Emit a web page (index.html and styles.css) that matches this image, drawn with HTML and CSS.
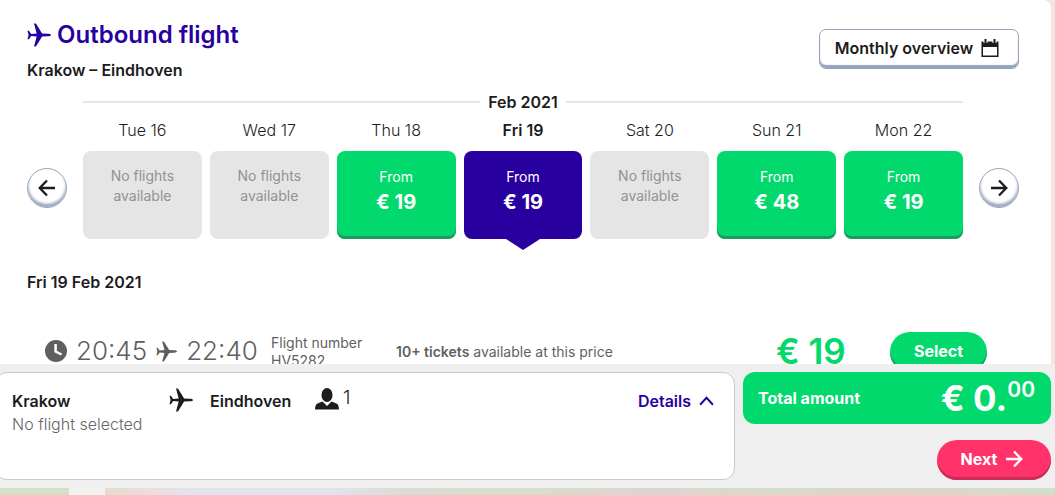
FILE: index.html
```html
<!DOCTYPE html>
<html lang="en">
<head>
<meta charset="utf-8">
<title>Outbound flight</title>
<link rel="stylesheet" href="styles.css">
</head>
<body>
<svg class="sprite" aria-hidden="true">
  <symbol id="plane" viewBox="0 0 24 24"><path d="M24 12c0 .7-1.300 1.300-3.200 1.300l-5.700.3-5.700 9.200c-.2.400-.5.600-1 .6H7l2.700-9.800-5.500-.5-2.300 3.200H.5l1.100-4.300L.5 7.700h1.400l2.300 3.200 5.500-.5L7 .6h1.400c.5 0 .8.200 1 .6l5.700 9.200 5.700.3c1.900 0 3.200.6 3.200 1.300z"/></symbol>
  <symbol id="arrow" viewBox="0 0 18 18"><path d="M1 9h15M9 1.500L16.300 9 9 16.500" fill="none" stroke="currentColor" stroke-width="2.300"/></symbol>
</svg>
<div class="page">
  <main class="panel">
    <header class="head">
      <div>
        <h1 class="title"><svg class="icon-plane"><use href="#plane"/></svg>Outbound flight</h1>
        <p class="route">Krakow – Eindhoven</p>
      </div>
      <button class="overview" type="button">Monthly overview
        <svg class="icon-cal" viewBox="0 0 18 18"><path fill-rule="evenodd" d="M.5 2.500h2V4h4V2.500h5V4h4V2.500h2V18H.5zM2 8v8.500h14V8z"/><path d="M3.500 0h2v4h-2zM12.500 0h2v4h-2z"/></svg>
      </button>
    </header>
    <section class="calendar">
      <button class="round back" type="button" aria-label="Previous days"><svg><use href="#arrow"/></svg></button>
      <div class="week">
        <h2 class="month">Feb 2021</h2>
        <div class="days">
          <div class="day"><span class="date">Tue 16</span><div class="slot none">No flights available</div></div>
          <div class="day"><span class="date">Wed 17</span><div class="slot none">No flights available</div></div>
          <div class="day"><span class="date">Thu 18</span><button class="slot" type="button">From<strong>€ 19</strong></button></div>
          <div class="day"><span class="date current">Fri 19</span><button class="slot selected" type="button">From<strong>€ 19</strong></button></div>
          <div class="day"><span class="date">Sat 20</span><div class="slot none">No flights available</div></div>
          <div class="day"><span class="date">Sun 21</span><button class="slot" type="button">From<strong>€ 48</strong></button></div>
          <div class="day"><span class="date">Mon 22</span><button class="slot" type="button">From<strong>€ 19</strong></button></div>
        </div>
      </div>
      <button class="round" type="button" aria-label="Next days"><svg><use href="#arrow"/></svg></button>
    </section>
    <h2 class="chosen">Fri 19 Feb 2021</h2>
    <section class="flight">
      <div class="times">
        <svg class="icon-clock" viewBox="0 0 22 22"><circle cx="11" cy="11" r="11"/><path d="M10.600 4v7.500l6 3" fill="none" stroke="#fff" stroke-width="2.500"/></svg>
        <span>20:45</span>
        <svg class="icon-hop"><use href="#plane"/></svg>
        <span>22:40</span>
      </div>
      <div class="number">Flight number<br>HV5282</div>
      <div class="tickets"><strong>10+ tickets</strong> available at this price</div>
      <div class="price">€ 19</div>
      <button class="select" type="button">Select</button>
    </section>
  </main>
  <footer class="basket">
    <section class="summary">
      <div class="from"><strong>Krakow</strong><span class="status">No flight selected</span></div>
      <svg class="icon-trip"><use href="#plane"/></svg>
      <strong class="to">Eindhoven</strong>
      <div class="people"><svg class="icon-person" viewBox="0 0 24 22"><ellipse cx="12" cy="7" rx="5.500" ry="7"/><path d="M7.500 13.500L12 18l4.500-4.500 5 2c1.700.8 2.300 2.800 2.500 6H0c.2-3.200.8-5.200 2.500-6z"/></svg>1</div>
      <a class="details" href="#details">Details<svg viewBox="0 0 14 9"><path d="M1 8l6-6.500L13 8" fill="none" stroke="currentColor" stroke-width="1.800"/></svg></a>
    </section>
    <div class="checkout">
      <div class="total"><span>Total amount</span><span class="amount">€ 0.<span class="cents">00</span></span></div>
      <button class="next" type="button">Next<svg><use href="#arrow"/></svg></button>
    </div>
  </footer>
</div>
</body>
</html>
```
FILE: styles.css
```css
* { box-sizing: border-box; }

body {
  margin: 0;
  color: #1c1c1c;
  font: 400 16px/20px Inter, "Open Sans", sans-serif;
  background: #f3e6da linear-gradient(90deg, #d4dfc8 0 69px, #f1f2eb 69px 105px, #e4dccb 105px, #ecdde0 155px, #e0e3ef 190px, #e0e3ef 330px, #dbdcd2 400px, #d6decb 520px, #ddd5cf 640px, #d6dbc8 780px, #dfd4c8 900px, #d1dfca) bottom / 100% 7px no-repeat;
}

button { font: inherit; color: inherit; border: 0; padding: 0; cursor: pointer; }
h1, h2, p { margin: 0; }
strong { font-weight: 600; }
svg { fill: currentColor; flex: none; }
.sprite { position: absolute; width: 0; height: 0; }

.page {
  display: flex;
  flex-direction: column;
  height: 100vh;
  padding-bottom: 7px;
}

.panel {
  flex: 1;
  min-height: 0;
  overflow: hidden;
  margin-right: 4px;
  padding: 20px 32px 0 27px;
  background: #fff;
  border-top-right-radius: 8px;
}

.head { display: flex; justify-content: space-between; align-items: flex-start; }
.title {
  display: flex;
  align-items: center;
  gap: 6px;
  color: #2900a0;
  font-size: 24px;
  line-height: 30px;
  font-weight: 600;
}
.icon-plane, .icon-trip { width: 24px; height: 24px; }
.route { margin-top: 10px; font-weight: 600; }

.overview {
  display: flex;
  align-items: center;
  justify-content: center;
  gap: 8px;
  width: 200px;
  height: 40px;
  margin-top: 9px;
  padding: 0 4px 2px 0;
  background: #fff;
  border: 1px solid #94a5bb;
  border-radius: 7px;
  box-shadow: inset 0 -3px 1px #94a5bb;
  font-weight: 600;
}
.icon-cal { width: 18px; height: 18px; }

.calendar { display: flex; align-items: flex-end; gap: 16px; margin-top: 12px; }
.round {
  display: flex;
  align-items: center;
  justify-content: center;
  width: 40px;
  height: 40px;
  margin-bottom: 31px;
  background: #fff;
  border: 1px solid #94a5bb;
  border-radius: 50%;
  box-shadow: inset 0 -3px 3px #94a5bb;
}
.round svg { width: 18px; height: 18px; }
.back svg { transform: rotate(180deg); }

.week { flex: 1; }
.month {
  display: flex;
  align-items: center;
  gap: 8px;
  font-size: 16px;
  font-weight: 600;
}
.month::before, .month::after { content: ""; flex: 1; height: 2px; background: #e5e5e5; }

.days { display: grid; grid-template-columns: repeat(7, 1fr); gap: 8px; margin-top: 8px; }
.day { display: flex; flex-direction: column; gap: 11px; text-align: center; }
.date { font-weight: 300; }
.date.current { font-weight: 600; }
.slot {
  position: relative;
  height: 88px;
  padding: 0 20px 11px;
  color: #fff;
  background: #02d96d;
  border-radius: 8px;
  box-shadow: inset 0 -3px #1b9c5d;
  font-size: 14px;
}
.slot strong { display: block; margin-top: 5px; font-size: 20px; font-weight: 700; }
.none { padding-top: 15px; color: #929292; background: #e5e5e5; box-shadow: none; }
.selected { background: #2900a0; box-shadow: none; }
.selected::after {
  content: "";
  position: absolute;
  top: 100%;
  left: 50%;
  margin-left: -17px;
  border: 17px solid transparent;
  border-top: 11px solid #2900a0;
  border-bottom: 0;
}

.chosen { margin-top: 33px; font-size: 16px; font-weight: 600; }

.flight {
  display: grid;
  grid-template-columns: 226px 125px 1fr 114px 97px;
  align-items: start;
  margin-top: 40px;
  padding: 0 32px 0 18px;
  color: #5f5f5f;
  font-size: 14px;
}
.times { display: flex; align-items: center; gap: 9px; font-size: 26px; line-height: 38px; font-weight: 300; }
.icon-clock { width: 22px; height: 22px; }
.icon-hop { width: 21px; height: 21px; }
.number { line-height: 18px; padding-top: 2px; }
.tickets { padding-top: 10px; }
.price { color: #02d96d; font-size: 35px; line-height: 38px; font-weight: 600; }
.select {
  height: 40px;
  padding-bottom: 2px;
  color: #fff;
  background: #02d96d;
  border-radius: 20px;
  box-shadow: inset 0 -3px #1b9c5d;
  font-size: 16px;
  font-weight: 700;
}

.basket {
  display: flex;
  gap: 8px;
  padding: 8px 4px 8px 0;
  background: #efefef;
}
.summary {
  flex: 1;
  display: flex;
  align-items: flex-start;
  margin-left: -5px;
  padding: 15px 20px 0 16px;
  background: #fff;
  border: 1px solid #c9c9c9;
  border-radius: 12px;
}
.from { width: 157px; }
.status { display: block; line-height: 20px; color: #666; font-weight: 300; }
.from strong, .to { display: block; line-height: 26px; }
.to { margin-left: 17px; width: 105px; }
.people { display: flex; gap: 4px; color: #1c1c1c; font-size: 19px; font-weight: 300; }
.icon-person { width: 24px; height: 22px; }
.details {
  display: flex;
  align-items: center;
  gap: 8px;
  margin-left: auto;
  color: #2900a0;
  font-weight: 600;
  line-height: 26px;
  text-decoration: none;
}
.details svg { width: 15px; height: 10px; }

.checkout { display: flex; flex-direction: column; align-items: flex-end; gap: 16px; width: 308px; }
.total {
  display: flex;
  align-items: center;
  justify-content: space-between;
  width: 100%;
  height: 52px;
  padding: 0 16px 0 15px;
  color: #fff;
  background: #02d96d;
  border-radius: 12px;
  font-weight: 700;
}
.amount { display: flex; font-size: 35px; line-height: 46px; }
.cents { font-size: 21px; line-height: 30px; font-weight: 600; }
.next {
  display: flex;
  align-items: center;
  justify-content: center;
  gap: 8px;
  width: 114px;
  height: 40px;
  padding: 0 4px 2px 0;
  color: #fff;
  background: #ff3369;
  border-radius: 20px;
  box-shadow: inset 0 -3px #cb2c57;
  font-weight: 700;
}
.next svg { width: 18px; height: 18px; }
```
